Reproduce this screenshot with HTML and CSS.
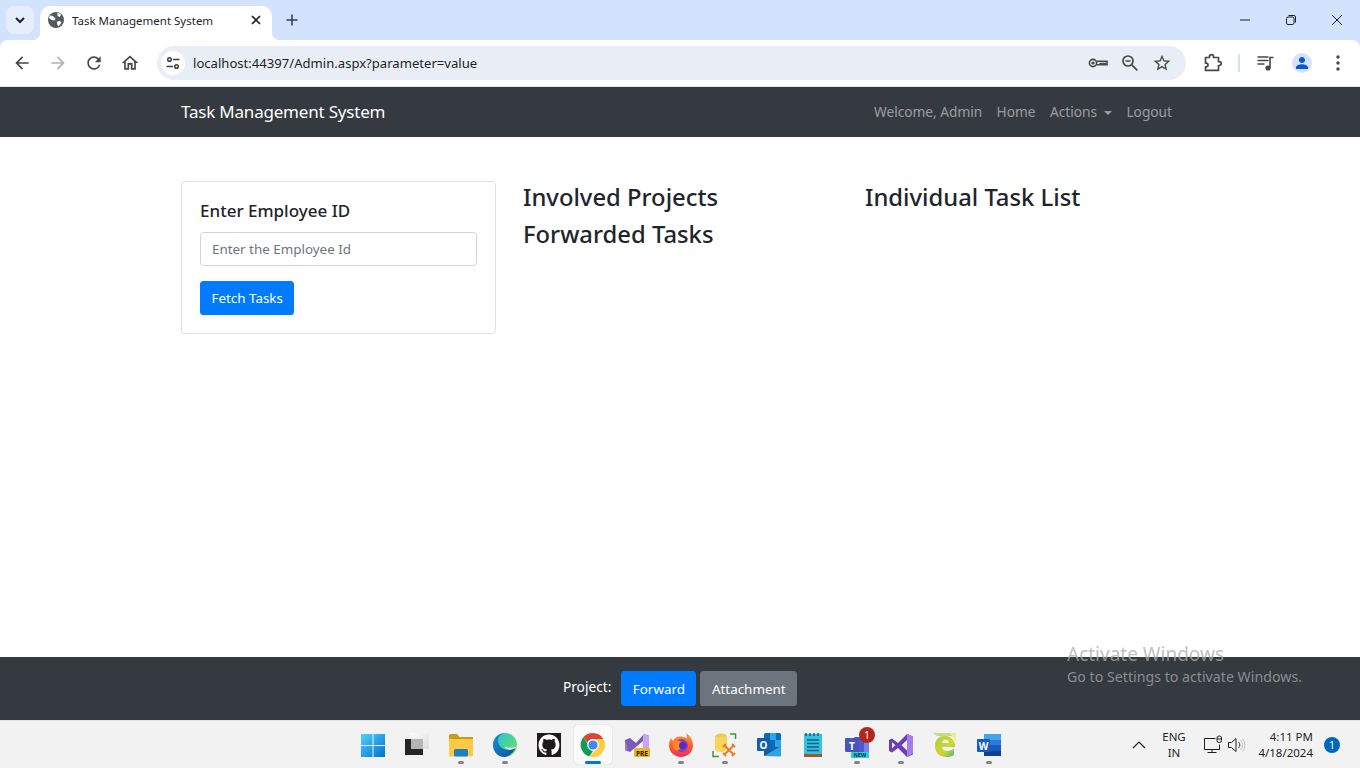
FILE: index.html
```html
<!DOCTYPE html>
<html lang="en">
<head>
  <meta charset="UTF-8">
  <meta name="viewport" content="width=device-width, initial-scale=1.0">
  <title>Task Management System</title>
  <link rel="stylesheet" href="styles.css">
</head>
<body>
  <div class="tabstrip">
    <button class="tab-search">
      <svg width="16" height="16" viewBox="0 0 16 16"><path d="M4 6l4 4 4-4" fill="none" stroke="#1f2328" stroke-width="2"/></svg>
    </button>
    <div class="tab">
      <svg class="favicon" width="16" height="16" viewBox="0 0 16 16"><circle cx="8" cy="8" r="8" fill="#55595e"/><path d="M2 3.500l3 .5 2.500 2.500-1 2-3-.5-2.500-2zM9 9.500l3-.5 1.500 1.500-3 4-1.200-2zM9.500 .500l3.500 2-1 2.500-2.500-1z" fill="#fff"/></svg>
      <span class="tab-title">Task Management System</span>
      <svg class="tab-close" width="16" height="16" viewBox="0 0 16 16"><path d="M4 4l8 8M12 4l-8 8" stroke="#1f2328" stroke-width="1.700"/></svg>
    </div>
    <button class="new-tab">
      <svg width="16" height="16" viewBox="0 0 16 16"><path d="M8 2.500v11M2.500 8h11" stroke="#3c4043" stroke-width="1.600"/></svg>
    </button>
    <div class="win-controls">
      <span class="win-btn"><svg width="12" height="12" viewBox="0 0 12 12"><path d="M1 6h10" stroke="#1f1f1f"/></svg></span>
      <span class="win-btn"><svg width="12" height="12" viewBox="0 0 12 12"><rect x="1.500" y="3" width="7.500" height="7.500" rx="1.500" fill="none" stroke="#1f1f1f"/><path d="M3.500 1.500h5.500a1.500 1.500 0 0 1 1.500 1.500v5.500" fill="none" stroke="#1f1f1f"/></svg></span>
      <span class="win-btn"><svg width="12" height="12" viewBox="0 0 12 12"><path d="M1 1l10 10M11 1L1 11" stroke="#1f1f1f"/></svg></span>
    </div>
  </div>

  <div class="toolbar">
    <span class="tool-btn"><svg width="20" height="20" viewBox="0 0 24 24"><path fill="#474747" d="M20 11H7.830l5.590-5.590L12 4l-8 8 8 8 1.410-1.410L7.830 13H20v-2z"/></svg></span>
    <span class="tool-btn"><svg width="20" height="20" viewBox="0 0 24 24"><path fill="#b0b2b5" d="M12 4l-1.410 1.410L16.170 11H4v2h12.170l-5.580 5.590L12 20l8-8z"/></svg></span>
    <span class="tool-btn"><svg width="20" height="20" viewBox="0 0 24 24"><path fill="#474747" d="M17.650 6.350A7.958 7.958 0 0 0 12 4c-4.420 0-7.990 3.580-7.990 8s3.570 8 7.990 8c3.730 0 6.840-2.550 7.730-6h-2.080A5.990 5.990 0 0 1 12 18c-3.310 0-6-2.690-6-6s2.690-6 6-6c1.660 0 3.140.69 4.220 1.780L13 11h7V4l-2.350 2.350z"/></svg></span>
    <span class="tool-btn"><svg width="20" height="20" viewBox="0 0 24 24"><path fill="#474747" d="M12 5.690l5 4.500V18h-2v-6H9v6H7v-7.810l5-4.500M12 3L2 12h3v8h6v-6h2v6h6v-8h3L12 3z"/></svg></span>

    <div class="omnibox">
      <span class="site-chip">
        <svg width="16" height="16" viewBox="0 0 16 16" fill="none" stroke="#3c4043" stroke-width="1.500"><circle cx="4.500" cy="4.500" r="1.800"/><path d="M8 4.500h6.500M1.500 11.500H8"/><circle cx="11.500" cy="11.500" r="1.800"/></svg>
      </span>
      <span class="url">localhost:44397/Admin.aspx?parameter=value</span>
      <span class="omni-icon"><svg width="20" height="20" viewBox="0 0 20 20" fill="none" stroke="#474747" stroke-width="1.600"><circle cx="5" cy="10" r="3.600"/><circle cx="5" cy="10" r=".8"/><path d="M8.600 8.300h10.400v3.500h-1.800v-1.200h-1.600v1.200h-1.800v-1.200h-1.600v1.200H8.600"/></svg></span>
      <span class="omni-icon"><svg width="20" height="20" viewBox="0 0 20 20" fill="none" stroke="#474747" stroke-width="1.700"><circle cx="8" cy="8" r="5"/><path d="M5.500 8h5M11.800 11.800l5.500 5.500"/></svg></span>
      <span class="omni-icon"><svg width="20" height="20" viewBox="0 0 24 24"><path fill="#474747" d="M22 9.240l-7.190-.62L12 2 9.190 8.630 2 9.240l5.460 4.730L5.820 21 12 17.270 18.180 21l-1.630-7.030L22 9.240zM12 15.400l-3.760 2.270 1-4.280-3.320-2.880 4.380-.38L12 6.100l1.710 4.040 4.380.38-3.320 2.880 1 4.280L12 15.400z"/></svg></span>
    </div>

    <span class="tool-btn"><svg width="20" height="20" viewBox="0 0 20 20"><path fill="none" stroke="#474747" stroke-width="1.700" stroke-linejoin="round" d="M2.500 4.500h4V3.600a2 2 0 0 1 4 0v.9h5v4.200h.8a1.900 1.900 0 0 1 0 3.800h-.8v4.900h-13v-3.600h.7a1.800 1.800 0 0 0 0-3.600h-.7z"/></svg></span>
    <span class="tool-divider"></span>
    <span class="tool-btn"><svg width="20" height="20" viewBox="0 0 20 20"><path d="M1.500 4h11M1.500 7.500h11M1.500 11h7" stroke="#474747" stroke-width="1.500"/><circle cx="12" cy="15" r="2.600" fill="#474747"/><path d="M14 15V4.500h3.500" fill="none" stroke="#474747" stroke-width="1.600"/></svg></span>
    <span class="tool-btn">
      <span class="avatar"><svg width="16" height="16" viewBox="0 0 24 24"><path fill="#0b57d0" d="M12 12c2.900 0 4.600-2 4.600-4.400S14.900 3 12 3 7.400 5.200 7.400 7.600 9.100 12 12 12zm0 2c-3.500 0-9 1.700-9 4.600V21h18v-2.400c0-2.900-5.500-4.600-9-4.600z"/></svg></span>
    </span>
    <span class="tool-btn"><svg width="20" height="20" viewBox="0 0 20 20"><circle cx="10" cy="4" r="1.700" fill="#474747"/><circle cx="10" cy="10" r="1.700" fill="#474747"/><circle cx="10" cy="16" r="1.700" fill="#474747"/></svg></span>
  </div>

  <nav class="navbar">
    <a class="brand" href="#">Task Management System</a>
    <ul class="nav-links">
      <li>Welcome, Admin</li>
      <li>Home</li>
      <li class="dropdown-toggle">Actions</li>
      <li>Logout</li>
    </ul>
  </nav>

  <main class="content">
    <div class="card">
      <h5 class="card-title">Enter Employee ID</h5>
      <input class="form-control" type="text" placeholder="Enter the Employee Id">
      <button class="btn btn-primary fetch-btn">Fetch Tasks</button>
    </div>
    <div class="col">
      <h3>Involved Projects</h3>
      <h3>Forwarded Tasks</h3>
    </div>
    <div class="col">
      <h3>Individual Task List</h3>
    </div>
  </main>

  <footer class="footer">
    <span class="footer-label">Project:</span>
    <button class="btn btn-primary">Forward</button>
    <button class="btn btn-secondary">Attachment</button>
  </footer>

  <div class="activate">
    <div class="activate-title">Activate Windows</div>
    <div class="activate-sub">Go to Settings to activate Windows.</div>
  </div>

  <div class="taskbar">
    <div class="task-icons">
      <span class="task-btn">
        <svg width="26" height="26" viewBox="0 0 26 26"><defs><linearGradient id="win" x1="0" y1="0" x2="1" y2="1"><stop offset="0" stop-color="#4fd0fb"/><stop offset="1" stop-color="#0072cf"/></linearGradient></defs><path fill="url(#win)" d="M1 2h11.500v11H1zM13.500 2H25v11H13.500zM1 14h11.500v11H1zM13.500 14H25v11H13.500z"/></svg>
      </span>
      <span class="task-btn">
        <svg width="26" height="26" viewBox="0 0 26 26"><defs><linearGradient id="tv" x1="0" y1="0" x2="1" y2="1"><stop offset="0" stop-color="#fafafa"/><stop offset="1" stop-color="#dedede"/></linearGradient></defs><rect x="7" y="1" width="18" height="16" fill="url(#tv)"/><rect x="1" y="7" width="18" height="16" fill="#262626"/><rect x="7" y="7" width="12" height="10" fill="#b5b5b5"/></svg>
      </span>
      <span class="task-btn">
        <svg width="26" height="26" viewBox="0 0 26 26"><path fill="#c99a1b" d="M1 3.500A1.500 1.500 0 0 1 2.500 2H9l2.500 3H25v4H1z"/><path fill="#fbcb45" d="M1 7h24v16a1.500 1.500 0 0 1-1.500 1.500h-21A1.500 1.500 0 0 1 1 23z"/><rect x="6" y="17" width="14" height="7.500" rx="1.500" fill="#1c7fc4"/></svg>
        <i class="run-dot"></i>
      </span>
      <span class="task-btn">
        <svg width="26" height="26" viewBox="0 0 26 26"><defs><linearGradient id="edge1" x1="0" y1="0" x2="1" y2="1"><stop offset="0" stop-color="#2ec5d8"/><stop offset=".6" stop-color="#4dd68a"/><stop offset="1" stop-color="#9fe35c"/></linearGradient><linearGradient id="edge2" x1="0" y1="0" x2="1" y2="1"><stop offset="0" stop-color="#1a93dc"/><stop offset="1" stop-color="#0b4f9a"/></linearGradient></defs><circle cx="13" cy="13" r="12" fill="url(#edge1)"/><path fill="url(#edge2)" d="M1 13C1 6.500 6.500 1 13 1c-5 1-8 5-6.500 10 1 4 5.500 7 10 7 2.500 0 5-.8 7-2.500-1.500 5-6 9-11 9.500C6 25 1 19.500 1 13z"/><path fill="#f2f2f2" d="M25 14.500c-1.500 1.800-4 3-7 3-2.500 0-4.800-.9-5.500-3 1.500.9 3.500 1.300 5.500 1.300 3 0 5.300-.3 7-1.300z"/></svg>
        <i class="run-dot"></i>
      </span>
      <span class="task-btn">
        <svg width="26" height="26" viewBox="0 0 26 26"><rect x="1" y="1" width="24" height="24" fill="#1f1b1c"/><g transform="translate(2.500 2.500) scale(1.310)"><path fill="#fff" d="M8 0C3.580 0 0 3.580 0 8c0 3.540 2.290 6.530 5.470 7.590.4.070.55-.17.55-.38 0-.19-.01-.82-.01-1.490-2.010.37-2.530-.49-2.690-.94-.09-.23-.48-.94-.82-1.130-.28-.15-.68-.52-.01-.53.63-.01 1.080.58 1.230.82.72 1.210 1.870.87 2.330.66.070-.52.28-.87.51-1.070-1.780-.2-3.640-.89-3.640-3.950 0-.87.31-1.590.82-2.150-.08-.2-.36-1.020.08-2.120 0 0 .67-.21 2.200.82.64-.18 1.320-.27 2-.27.68 0 1.360.09 2 .27 1.530-1.040 2.200-.82 2.200-.82.44 1.100.16 1.920.08 2.120.51.56.82 1.270.82 2.150 0 3.070-1.870 3.750-3.650 3.950.29.25.54.73.54 1.480 0 1.070-.01 1.930-.01 2.200 0 .21.15.46.55.38A8.013 8.013 0 0016 8c0-4.420-3.580-8-8-8z"/></g></svg>
      </span>
      <span class="task-btn task-btn-active">
        <svg width="26" height="26" viewBox="0 0 26 26"><path fill="#db4437" d="M13 1a12 12 0 0 1 10.400 6H13a6 6 0 0 0-5.700 4.100L3.500 5A12 12 0 0 1 13 1z"/><path fill="#0f9d58" d="M3.500 5l5.200 9.100A5 5 0 0 0 13 19l-3.700 5.400A12 12 0 0 1 3.500 5z"/><path fill="#ffcd40" d="M23.400 7A12 12 0 0 1 13 25l-3.700-.6L17.500 16a5 5 0 0 0 0-6l-4.500-3z"/><circle cx="13" cy="13" r="5.800" fill="#fff"/><circle cx="13" cy="13" r="4.600" fill="#4285f4"/></svg>
        <i class="run-bar"></i>
      </span>
      <span class="task-btn">
        <svg width="26" height="26" viewBox="0 0 26 26"><path fill="#7c5bb5" d="M1 8l5-2 6 5 8-9 5 2v12h-6v-7l-7 6-6 5-5-2z"/><path fill="#c8a5ee" d="M19 2l6 2v12h-6z"/><path fill="#9a7bd0" d="M1 8l3 9-3 2z"/><rect x="10" y="16" width="16" height="9" rx="1" fill="#e8b52b"/><text x="18" y="23.500" class="mini-tag">PRE</text></svg>
      </span>
      <span class="task-btn">
        <svg width="26" height="26" viewBox="0 0 26 26"><defs><linearGradient id="fox" x1="0" y1="0" x2="0" y2="1"><stop offset="0" stop-color="#ffa01f"/><stop offset=".55" stop-color="#ff5a30"/><stop offset="1" stop-color="#ee2f5b"/></linearGradient></defs><path fill="url(#fox)" d="M18 1c4 3 7 7 7 12.500C25 20 19.500 25 13 25S1 20 1 13.500C1 10 2 7.500 3.500 6c0 1.500.7 2.500 1.700 3C6 6 9 4.500 12 4.500c2.500 0 5 .5 6.500 2C18.800 4.500 18.800 3 18 1z"/><circle cx="13.500" cy="13.500" r="6.500" fill="#7a3fd0"/><path fill="#ff8a25" d="M5 12c2-4 7-4 9-1.500 1 3-1.500 8-5.500 8C6 18.500 4.500 15 5 12z"/><circle cx="14.500" cy="13.500" r="3.500" fill="#5b2bb0"/></svg>
        <i class="run-dot"></i>
      </span>
      <span class="task-btn">
        <svg width="26" height="26" viewBox="0 0 26 26"><ellipse cx="9" cy="4.500" rx="6" ry="3" fill="#f1c94a"/><path fill="#f7d45c" d="M3 4.500h12V17c0 1.500-2.500 3-6 3s-6-1.500-6-3z"/><path d="M18 2h5.500v5M1 19v5.500h6" fill="none" stroke="#3f9a3a" stroke-width="1.500"/><path d="M12 13l9 9M22 13l-9 9" stroke="#ea7a1c" stroke-width="1.800"/><path d="M11 15l3-3M20 12l3 3M11 21l3 3M20 24l3-3" stroke="#ea7a1c" stroke-width="1.800"/></svg>
        <i class="run-dot"></i>
      </span>
      <span class="task-btn">
        <svg width="26" height="26" viewBox="0 0 26 26"><rect x="8" y="1" width="17" height="23" rx="1.500" fill="#0d6ab8"/><path fill="#29a7e8" d="M14 1h6v7h-6zM19 8h6v7h-6z"/><path fill="#16599c" d="M8 14l8 5 9-5v10H8z"/><path fill="#2ea4e6" d="M8 24l17-10v9a1.500 1.500 0 0 1-1.500 1.500z"/><rect x="1" y="6" width="13" height="13" rx="1" fill="#0f5fad"/><text x="7.500" y="16.500" class="tile-letter">O</text></svg>
      </span>
      <span class="task-btn">
        <svg width="26" height="26" viewBox="0 0 26 26"><rect x="4" y="2" width="18" height="20" fill="#36c2dd"/><path d="M6 1v3M10 1v3M14 1v3M18 1v3" stroke="#0d5d8a" stroke-width="1.500"/><path d="M7 8h12M7 11.500h12M7 15h12M7 18.500h12" stroke="#0f5f8f" stroke-width="1.500"/><rect x="4" y="22" width="18" height="3" fill="#a0552a"/></svg>
      </span>
      <span class="task-btn">
        <svg width="26" height="26" viewBox="0 0 26 26"><circle cx="21" cy="7" r="2.500" fill="#7b83eb"/><rect x="17" y="10" width="8" height="11" rx="1" fill="#7b83eb"/><rect x="10" y="5" width="10" height="16" rx="1" fill="#5059c9"/><rect x="1" y="6" width="14" height="14" rx="1" fill="#4b53bc"/><text x="8" y="17.500" class="tile-letter">T</text><rect x="7" y="20" width="18" height="6" fill="#22d3e6"/><text x="16" y="25.300" class="mini-tag mini-tag-new">NEW</text></svg>
        <span class="task-badge">1</span>
        <i class="run-dot"></i>
      </span>
      <span class="task-btn">
        <svg width="26" height="26" viewBox="0 0 26 26"><path fill="#6b3fb0" d="M1 8l3-1.500 6 4.500 9-9 6 2.500v18L19 25l-9-9-6 4.500L1 19z"/><path fill="#f2f2f2" d="M4 10v6.500l3.300-3.200zM19 8l-5.500 5.300L19 18.500z"/><path fill="#a67de8" d="M19 1.800L25 4.500v17L19 25z"/></svg>
        <i class="run-dot"></i>
      </span>
      <span class="task-btn">
        <svg width="26" height="26" viewBox="0 0 26 26"><defs><linearGradient id="eco" x1="0" y1="0" x2="1" y2="1"><stop offset="0" stop-color="#a8cf45"/><stop offset=".6" stop-color="#d1d82a"/><stop offset="1" stop-color="#48b2a2"/></linearGradient></defs><path fill="#b6d76a" d="M1 1h17l3 3H5z" opacity=".8"/><path fill="#e6ec9a" d="M19 1h5v9z"/><path fill="url(#eco)" d="M13 4a10 10 0 0 1 10 11H10c.5 3 3 4 5.500 4 2.500 0 5-1 6.500-2.500V23c-2 1.500-4.500 2-7.500 2C8 25 3 21 3 14S7 4 13 4zm-3 7h7c0-2-1.500-3.500-3.500-3.500S10 9 10 11z"/></svg>
      </span>
      <span class="task-btn">
        <svg width="26" height="26" viewBox="0 0 26 26"><rect x="8" y="2" width="17" height="22" rx="1" fill="#2b7cd3"/><rect x="8" y="2" width="17" height="6" fill="#41a5ee"/><rect x="8" y="13" width="17" height="6" fill="#185abd"/><rect x="8" y="19" width="17" height="5" fill="#103f91"/><rect x="1" y="7" width="13" height="13" rx="1" fill="#185abd"/><text x="7.500" y="17.500" class="tile-letter">W</text></svg>
        <i class="run-dot"></i>
      </span>
    </div>

    <div class="tray">
      <svg class="tray-chevron" width="14" height="14" viewBox="0 0 14 14"><path d="M1 10l6-6 6 6" fill="none" stroke="#1f1f1f" stroke-width="1.200"/></svg>
      <div class="tray-lang"><span>ENG</span><span>IN</span></div>
      <svg class="tray-net" width="20" height="20" viewBox="0 0 20 20" fill="none" stroke="#1f1f1f"><path d="M12.500 3.500H1.500v11h15v-5M9 14.500v3M4.500 17.500h9"/><rect x="14" y="1" width="4.500" height="6.500" rx="2"/><path d="M14 4h4.500"/></svg>
      <svg class="tray-vol" width="20" height="20" viewBox="0 0 20 20" fill="none"><path d="M1.500 7.500h3L9 3.500v13l-4.500-4h-3z" stroke="#1f1f1f"/><path d="M11.500 7a4 4 0 0 1 0 6" stroke="#444"/><path d="M13.500 5a7 7 0 0 1 0 10M15.500 3.500a10 10 0 0 1 0 13" stroke="#c4c4c4"/></svg>
      <div class="tray-clock"><span>4:11 PM</span><span>4/18/2024</span></div>
      <span class="tray-badge">1</span>
    </div>
  </div>
</body>
</html>
```

FILE: styles.css
```css
* {
  box-sizing: border-box;
}
body {
  margin: 0;
  height: 100vh;
  overflow: hidden;
  display: flex;
  flex-direction: column;
  font-family: "Noto Sans", "Open Sans", sans-serif;
  font-size: 13.7px;
  color: #212529;
  background: #d3e3fd;
}
button {
  font-family: inherit;
  border: none;
  padding: 0;
}
svg {
  display: block;
  flex: none;
}

/* browser tabs */
.tabstrip {
  height: 40px;
  flex: none;
  display: flex;
  background: #d3e3fd;
}
.tab-search {
  width: 28px;
  height: 28px;
  margin: 6px 0 0 6px;
  background: #e6eefc;
  border-radius: 8px;
  display: flex;
  align-items: center;
  justify-content: center;
}
.tab {
  width: 232px;
  height: 34px;
  margin: 6px 0 0 6px;
  padding: 0 8px 6px;
  background: #fff;
  border-radius: 10px 10px 0 0;
  display: flex;
  align-items: center;
  position: relative;
}
.tab::before, .tab::after {
  content: "";
  position: absolute;
  bottom: 0;
  width: 8px;
  height: 8px;
  background: radial-gradient(circle at 0 0, #d3e3fd 8px, #fff 8.5px);
}
.tab::before {
  left: -8px;
}
.tab::after {
  right: -8px;
  background: radial-gradient(circle at 100% 0, #d3e3fd 8px, #fff 8.5px);
}
.favicon {
  margin-right: 8px;
}
.tab-title {
  flex: 1;
  font-size: 11.5px;
  color: #1f1f1f;
  white-space: nowrap;
}
.new-tab {
  width: 28px;
  height: 28px;
  margin: 6px 0 0 6px;
  background: transparent;
  display: flex;
  align-items: center;
  justify-content: center;
}
.win-controls {
  margin-left: auto;
  display: flex;
}
.win-btn {
  width: 46px;
  height: 40px;
  display: flex;
  align-items: center;
  justify-content: center;
}

/* address bar row */
.toolbar {
  height: 47px;
  flex: none;
  display: flex;
  align-items: center;
  padding: 0 4px;
  background: #fff;
  border-bottom: 1px solid #e3e3e3;
  border-radius: 8px 8px 0 0;
}
.tool-btn {
  width: 36px;
  height: 36px;
  display: flex;
  align-items: center;
  justify-content: center;
}
.omnibox {
  flex: 1;
  height: 34px;
  margin: 0 9px;
  padding: 0 8px 0 4px;
  background: #e9eef6;
  border-radius: 17px;
  display: flex;
  align-items: center;
}
.site-chip {
  width: 24px;
  height: 24px;
  border-radius: 50%;
  background: #fff;
  display: flex;
  align-items: center;
  justify-content: center;
}
.url {
  flex: 1;
  margin-left: 8px;
  font-size: 13.1px;
  color: #1f1f1f;
}
.omni-icon {
  width: 32px;
  display: flex;
  justify-content: center;
}
.tool-divider {
  width: 2px;
  height: 18px;
  margin: 0 8px 0 7px;
  background: #d3e3fd;
}
.avatar {
  width: 20px;
  height: 20px;
  border-radius: 50%;
  background: #d3e3fd;
  display: flex;
  align-items: center;
  justify-content: center;
}

/* page */
.navbar {
  height: 50px;
  flex: none;
  padding: 0 188px 1px 181px;
  background: #343a40;
  display: flex;
  align-items: center;
  justify-content: space-between;
}
.brand {
  font-size: 17px;
  letter-spacing: -0.2px;
  color: #fff;
  text-decoration: none;
}
.nav-links {
  list-style: none;
  margin: 0;
  padding: 0;
  display: flex;
  gap: 14.4px;
  color: rgba(255, 255, 255, 0.5);
}
.dropdown-toggle::after {
  content: "";
  display: inline-block;
  margin-left: 7px;
  vertical-align: 2.5px;
  border-top: 4px solid;
  border-left: 4px solid transparent;
  border-right: 4px solid transparent;
}
.content {
  flex: 1;
  padding: 44px 0 0 181px;
  background: #fff;
  display: grid;
  grid-template-columns: 315px 315px 315px;
  column-gap: 27px;
  align-items: start;
}
.card {
  height: 153px;
  padding: 17px 18px;
  border: 1px solid #dfdfdf;
  border-radius: 3.6px;
}
.card-title {
  margin: 0 0 10px;
  font-size: 17px;
  font-weight: 500;
  line-height: 23px;
}
.form-control {
  display: block;
  width: 100%;
  height: 34px;
  padding: 0 11px;
  font-family: inherit;
  font-size: 13.4px;
  border: 1px solid #ced4da;
  border-radius: 3.6px;
}
.form-control::placeholder {
  color: #6c757d;
  opacity: 1;
}
.btn {
  height: 35px;
  padding: 0 11.5px;
  font-size: 13.4px;
  color: #fff;
  border-radius: 3.6px;
}
.btn-primary {
  background: #007bff;
}
.btn-secondary {
  background: #6c757d;
}
.fetch-btn {
  height: 34px;
  margin-top: 15px;
}
.col {
  margin-top: -2px;
}
.col h3 {
  margin: 0;
  font-size: 23.8px;
  font-weight: 500;
  line-height: 37px;
  color: #212529;
}
.footer {
  height: 63px;
  flex: none;
  background: #343a40;
  display: flex;
  align-items: center;
  justify-content: center;
  gap: 4px;
}
.footer-label {
  margin: -4px 6px 0 0;
  color: #fff;
}

/* watermark sits over the page */
.activate {
  position: absolute;
  left: 1067px;
  top: 641px;
  color: rgba(170, 170, 170, 0.75);
  pointer-events: none;
}
.activate-title {
  font-size: 19px;
  line-height: 26px;
}
.activate-sub {
  font-size: 14.2px;
  line-height: 20px;
}

/* windows taskbar */
.taskbar {
  height: 48px;
  flex: none;
  display: flex;
  align-items: center;
  padding-left: 351px;
  background: #f2f2f2;
  border-top: 1px solid #e4e4e4;
}
.task-icons {
  display: flex;
}
.task-btn {
  width: 44px;
  height: 47px;
  display: flex;
  align-items: center;
  justify-content: center;
  position: relative;
}
.task-btn-active::before {
  content: "";
  position: absolute;
  left: 3px;
  right: 3px;
  top: 4px;
  bottom: 4px;
  background: #fafafa;
  border-radius: 4px;
  box-shadow: 0 0 1px rgba(0, 0, 0, 0.25);
}
.task-btn-active svg {
  position: relative;
}
.run-dot, .run-bar {
  position: absolute;
  top: 40px;
  left: 19px;
  width: 6px;
  height: 3px;
  border-radius: 2px;
  background: #858585;
}
.run-bar {
  left: 14px;
  width: 16px;
  background: #0078d4;
}
.task-badge {
  position: absolute;
  top: 6px;
  left: 24px;
  width: 16px;
  height: 16px;
  border-radius: 50%;
  background: #b3261e;
  color: #fff;
  font-size: 10.5px;
  line-height: 16px;
  text-align: center;
}
.mini-tag {
  font-family: "Noto Sans", sans-serif;
  font-size: 6.5px;
  font-weight: 700;
  text-anchor: middle;
  fill: #1f1f1f;
}
.mini-tag-new {
  font-size: 5.5px;
}
.tile-letter {
  font-family: "Noto Sans", sans-serif;
  font-size: 10px;
  font-weight: 700;
  text-anchor: middle;
  fill: #fff;
}
.tray {
  display: flex;
  align-items: center;
  margin-left: 121px;
  font-size: 11.5px;
  color: #1f1f1f;
}
.tray-lang, .tray-clock {
  display: flex;
  flex-direction: column;
  line-height: 16px;
}
.tray-lang {
  width: 36px;
  margin-left: 10px;
  align-items: center;
}
.tray-net {
  margin-left: 11px;
}
.tray-vol {
  margin-left: 4px;
}
.tray-clock {
  width: 62px;
  margin-left: 4px;
  align-items: flex-end;
}
.tray-badge {
  width: 16px;
  height: 16px;
  margin-left: 11px;
  border-radius: 50%;
  background: #0067c0;
  color: #fff;
  font-size: 10.5px;
  line-height: 16px;
  text-align: center;
}
```
